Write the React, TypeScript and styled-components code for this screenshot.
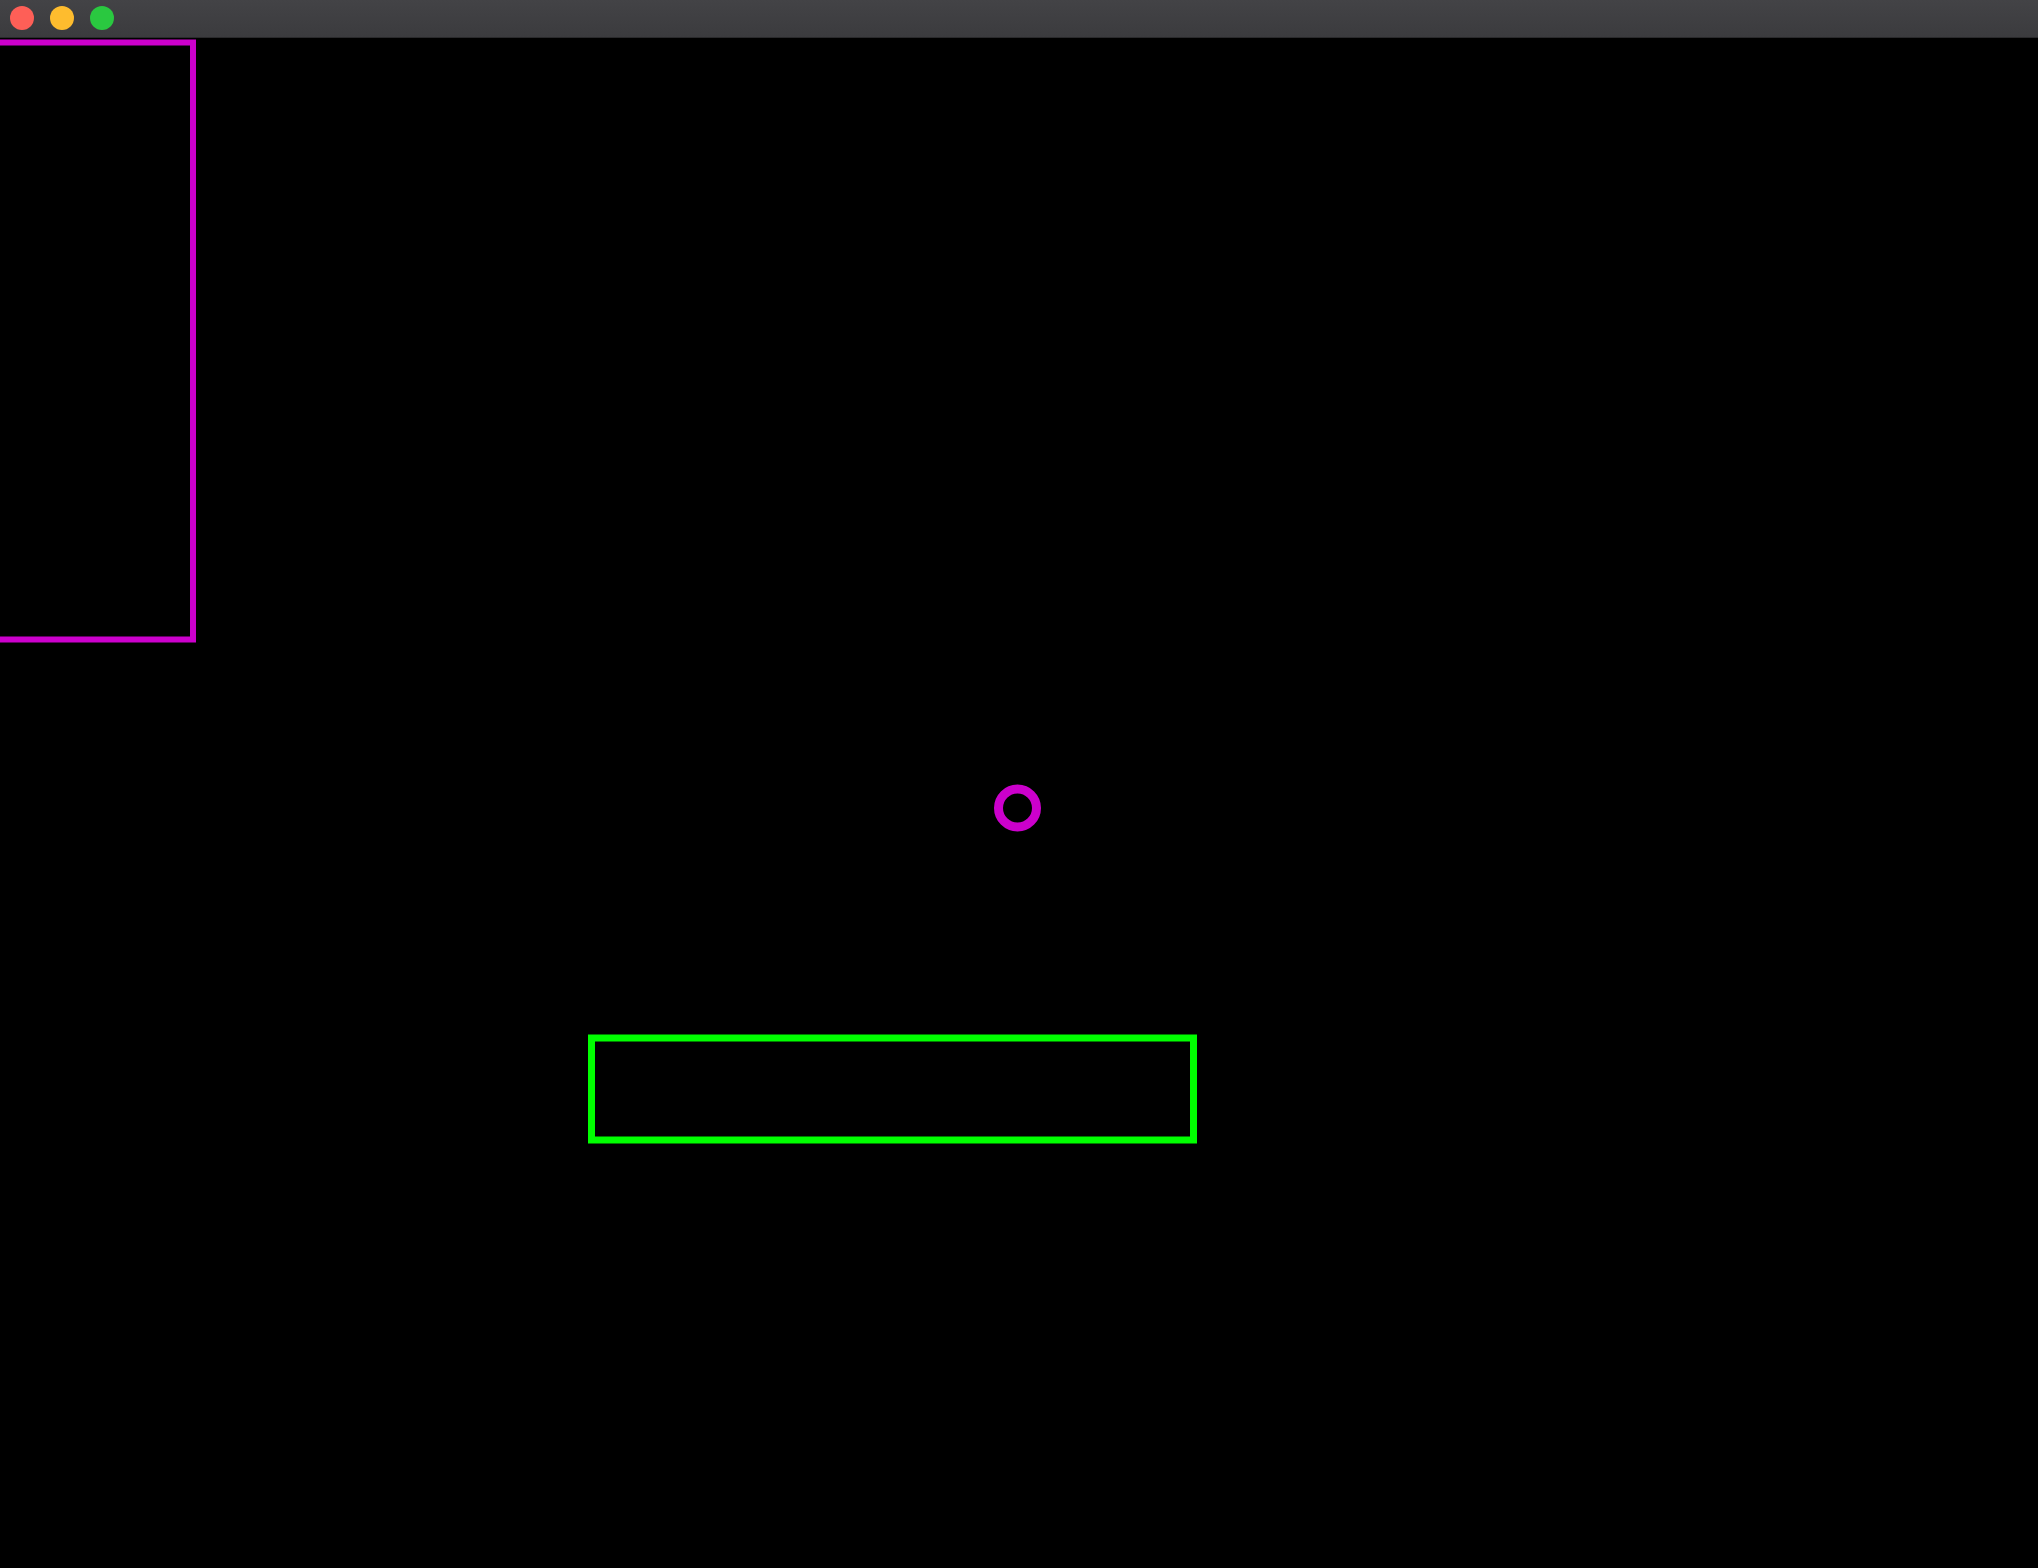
import React from "react";
import styled, { createGlobalStyle } from "styled-components";

const Global = createGlobalStyle`
  html, body { margin: 0; padding: 0; background: #000; overflow: hidden; }
  #root { width: 2038px; height: 1568px; }
`;

const Window = styled.div`
  width: 2038px;
  height: 1568px;
  display: flex;
  flex-direction: column;
  background: #000;
`;

const TitleBar = styled.div`
  height: 38px;
  flex: 0 0 38px;
  display: flex;
  align-items: center;
  gap: 16px;
  padding: 0 0 2px 10px;
  box-sizing: border-box;
  background: linear-gradient(#434346, #3b3b3e);
  border-bottom: 1px solid #2a2a2c;
`;

const Light = styled.span<{ $color: string }>`
  width: 24px;
  height: 24px;
  border-radius: 50%;
  background: ${(p) => p.$color};
  display: block;
`;

const Canvas = styled.svg`
  flex: 1;
  display: block;
  width: 2038px;
`;

export default function App() {
  return (
    <>
      <Global />
      <Window>
        <TitleBar>
          <Light $color="#fe5f57" />
          <Light $color="#febc2e" />
          <Light $color="#2ac840" />
        </TitleBar>
        <Canvas viewBox="0 0 2038 1529" xmlns="http://www.w3.org/2000/svg">
          <rect x={-20} y={4} width={213} height={597} fill="none" stroke="#cc00cc" strokeWidth={6} />
          <circle cx={1017.5} cy={769.5} r={19} fill="none" stroke="#cc00cc" strokeWidth={9} />
          <rect x={591.5} y={999.5} width={602} height={102} fill="none" stroke="#00ff00" strokeWidth={7} />
        </Canvas>
      </Window>
    </>
  );
}
